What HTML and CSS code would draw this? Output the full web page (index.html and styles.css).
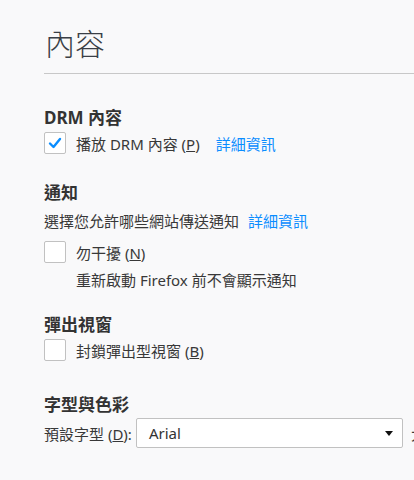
FILE: index.html
```html
<!DOCTYPE html>
<html lang="zh-TW">
<head>
<meta charset="utf-8">
<link rel="stylesheet" href="styles.css">
</head>
<body>
<main class="pane">
  <header class="pane-header">
    <h1 class="pane-title">內容</h1>
  </header>

  <section class="group group-drm">
    <h2 class="group-title">DRM 內容</h2>
    <div class="row">
      <span class="checkbox checked">
        <svg width="14" height="12" viewBox="0 0 14 12"><polyline points="2,6.5 5.5,10 12,2" fill="none" stroke="#0a8dff" stroke-width="2.4" stroke-linecap="round" stroke-linejoin="round"/></svg>
      </span>
      <span class="label">播放 DRM 內容 (<u>P</u>)</span>
      <a class="link" href="#">詳細資訊</a>
    </div>
  </section>

  <section class="group group-notify">
    <h2 class="group-title">通知</h2>
    <div class="desc">選擇您允許哪些網站傳送通知<a class="link" href="#">詳細資訊</a></div>
    <div class="row row-dnd">
      <span class="checkbox"></span>
      <span class="label">勿干擾 (<u>N</u>)</span>
    </div>
    <div class="note">重新啟動 Firefox 前不會顯示通知</div>
  </section>

  <section class="group group-popup">
    <h2 class="group-title">彈出視窗</h2>
    <div class="row">
      <span class="checkbox"></span>
      <span class="label">封鎖彈出型視窗 (<u>B</u>)</span>
    </div>
  </section>

  <section class="group group-fonts">
    <h2 class="group-title">字型與色彩</h2>
    <div class="font-row">
      <span class="font-label">預設字型 (<u>D</u>):</span>
      <span class="select">
        <span class="select-value">Arial</span>
        <span class="select-arrow"></span>
      </span>
      <span class="font-label">大小 (<u>S</u>):</span>
    </div>
  </section>
</main>
</body>
</html>
```

FILE: styles.css
```css
html, body {
  margin: 0;
  padding: 0;
  background: #f9f9fa;
  overflow: hidden;
}

body {
  font-family: "Noto Sans", "Noto Sans CJK TC", sans-serif;
  font-size: 15px;
  color: #383838;
}

.pane {
  padding-left: 44px;
  padding-top: 22px;
  width: 600px;
}

.pane-header {
  border-bottom: 1px solid #c8c8c8;
  padding-bottom: 11px;
}

.pane-title {
  margin: 0;
  font-family: "Noto Sans CJK TC", sans-serif;
  font-size: 30px;
  font-weight: 300;
  line-height: 40px;
  color: #3a3f46;
  padding-left: 1px;
}

.group-title {
  margin: 0;
  font-size: 17px;
  font-weight: 700;
  line-height: 24px;
  color: #333;
}

.group-drm { margin-top: 32px; }
.group-notify { margin-top: 25px; }
.group-popup { margin-top: 20px; }
.group-fonts { margin-top: 30px; }

.row {
  display: flex;
  align-items: center;
  height: 26px;
}

.checkbox {
  box-sizing: border-box;
  width: 22px;
  height: 22px;
  border: 1px solid #c1c1c1;
  border-radius: 2px;
  background: #fff;
  display: flex;
  align-items: center;
  justify-content: center;
  margin-right: 10px;
  flex-shrink: 0;
}

.checkbox svg { display: block; }

.label { white-space: nowrap; }

.link {
  color: #0a8dff;
  text-decoration: none;
  margin-left: 16px;
  white-space: nowrap;
}

.desc {
  margin-top: 3px;
  line-height: 26px;
  white-space: nowrap;
}

.desc .link { margin-left: 9px; }

.row-dnd { margin-top: 5px; }

.note {
  margin-top: 2px;
  padding-left: 32px;
  line-height: 26px;
  white-space: nowrap;
}

.font-row {
  display: flex;
  align-items: center;
  margin-top: 1px;
  height: 30px;
  white-space: nowrap;
}

.font-label { flex-shrink: 0; }

.select {
  box-sizing: border-box;
  width: 267px;
  height: 30px;
  margin-left: 4px;
  margin-right: 8px;
  border: 1px solid #c1c1c1;
  border-radius: 2px;
  background: #fff;
  display: flex;
  align-items: center;
  justify-content: space-between;
  padding: 0 9px 0 12px;
  flex-shrink: 0;
}

.select-value { color: #333; }

.select-arrow {
  width: 0;
  height: 0;
  border-left: 4px solid transparent;
  border-right: 4px solid transparent;
  border-top: 5px solid #111;
}
```
